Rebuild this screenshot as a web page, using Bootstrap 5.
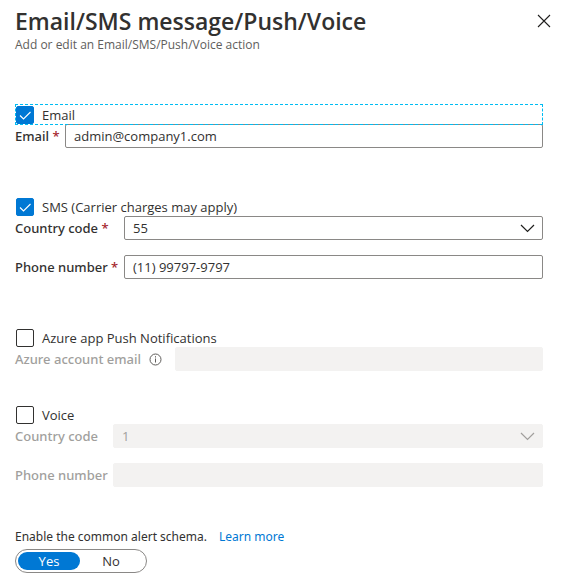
<!DOCTYPE html>
<html lang="en">
<head>
<meta charset="utf-8">
<meta name="viewport" content="width=device-width, initial-scale=1">
<title>Email/SMS message/Push/Voice</title>
<link href="https://cdn.jsdelivr.net/npm/bootstrap@5.3.0/dist/css/bootstrap.min.css" rel="stylesheet">
<style>
  body { font-family: "Open Sans", "Noto Sans", sans-serif; font-size: 13px; line-height: 20px; color: #323130; background: #fff; }
  .panel { padding: 6px 18px 8px 15px; }
  .panel-title { font-size: 23px; line-height: 30px; font-weight: 600; }
  .panel-sub { font-size: 12px; line-height: 18px; color: #605e5c; }
  .btn-dismiss { width: 16px; height: 16px; margin-top: 7px; margin-right: -9px; }
  .panel-form { margin-top: 50px; }
  .section { margin-bottom: 48px; }
  .section-short { margin-bottom: 33px; }
  .section-last { margin-bottom: 40px; }
  .check-row { height: 20px; padding-top: 2px; padding-left: 1px; gap: 8px; }
  .check-row.focused { outline: 1px dashed #00bcf2; position: relative; outline-offset: -1px; height: 21px; margin-bottom: -1px; padding-bottom: 1px; z-index: 1; }
  .check-row .form-check-input { width: 18px; height: 18px; margin: 0; border: 1px solid #323130; border-radius: 2px; }
  .check-row .form-check-input:checked { background-color: #0078d4; border-color: #0078d4; background-size: 18px 18px;
    background-image: url("data:image/svg+xml,%3Csvg xmlns='http://www.w3.org/2000/svg' viewBox='0 0 18 18'%3E%3Cpath fill='none' stroke='%23fff' stroke-width='1.1' d='M4 9.5l3.5 3.5L14.5 6'/%3E%3C/svg%3E"); }
  .fields { display: grid; row-gap: 15px; }
  .cols-email { grid-template-columns: 50px 1fr; }
  .cols-sms { grid-template-columns: 109px 1fr; }
  .cols-push { grid-template-columns: 160px 1fr; }
  .cols-voice { grid-template-columns: 98px 1fr; }
  .field-label { font-family: "Noto Sans", sans-serif; font-weight: 500; line-height: 24px; white-space: nowrap; }
  .field-label.off { color: #a19f9d; }
  .req { color: #a4262c; }
  .field { height: 24px; min-height: 24px; padding: 0 8px; font-size: 13px; line-height: 22px; color: #323130; border: 1px solid #8a8886; border-radius: 2px; }
  .form-select.field { background-size: 15px 10px; background-position: right 7px center;
    background-image: url("data:image/svg+xml,%3Csvg xmlns='http://www.w3.org/2000/svg' viewBox='0 0 15 10'%3E%3Cpath fill='none' stroke='%23201f1e' stroke-width='1.2' d='M1 2l6.5 6.5L14 2'/%3E%3C/svg%3E"); }
  .field:disabled { background-color: #f3f2f1; border-color: #f3f2f1; color: #a19f9d; opacity: 1; }
  .form-select.field:disabled {
    background-image: url("data:image/svg+xml,%3Csvg xmlns='http://www.w3.org/2000/svg' viewBox='0 0 15 10'%3E%3Cpath fill='none' stroke='%23a19f9d' stroke-width='1.2' d='M1 2l6.5 6.5L14 2'/%3E%3C/svg%3E"); }
  .schema-line { margin-bottom: 2px; gap: 12px; font-family: "Noto Sans", sans-serif; font-size: 12px; }
  .more { color: #0078d4; }
  .toggle { width: 132px; height: 24px; padding: 2px; border: 1px solid #8a8886; border-radius: 12px; }
  .toggle label { width: 62px; height: 18px; line-height: 18px; border-radius: 9px; text-align: center; cursor: pointer; }
  .toggle .btn-check:checked + label { background: #0078d4; color: #fff; }
</style>
<script src="https://cdn.jsdelivr.net/npm/bootstrap@5.3.0/dist/js/bootstrap.bundle.min.js"></script>
</head>
<body>
<main class="panel">
  <header class="d-flex justify-content-between align-items-start">
    <div>
      <h1 class="panel-title mb-0">Email/SMS message/Push/Voice</h1>
      <p class="panel-sub mb-0">Add or edit an Email/SMS/Push/Voice action</p>
    </div>
    <button type="button" class="btn-dismiss d-flex border-0 bg-transparent p-0" aria-label="Close">
      <svg width="16" height="16" viewBox="0 0 16 16" fill="none" stroke="#201f1e" stroke-width="1.1" aria-hidden="true"><path d="M2 2l12 12M14 2L2 14"/></svg>
    </button>
  </header>

  <form class="panel-form">
    <section class="section">
      <div class="check-row focused d-flex align-items-center">
        <input class="form-check-input" type="checkbox" id="useEmail" checked>
        <label for="useEmail">Email</label>
      </div>
      <div class="fields cols-email">
        <label class="field-label" for="email">Email <span class="req">*</span></label>
        <input class="form-control field" type="text" id="email" value="admin@company1.com">
      </div>
    </section>

    <section class="section">
      <div class="check-row d-flex align-items-center">
        <input class="form-check-input" type="checkbox" id="useSms" checked>
        <label for="useSms">SMS (Carrier charges may apply)</label>
      </div>
      <div class="fields cols-sms">
        <label class="field-label" for="smsCode">Country code <span class="req">*</span></label>
        <select class="form-select field" id="smsCode"><option>55</option></select>
        <label class="field-label" for="smsPhone">Phone number <span class="req">*</span></label>
        <input class="form-control field" type="text" id="smsPhone" value="(11) 99797-9797">
      </div>
    </section>

    <section class="section-short">
      <div class="check-row d-flex align-items-center">
        <input class="form-check-input" type="checkbox" id="usePush">
        <label for="usePush">Azure app Push Notifications</label>
      </div>
      <div class="fields cols-push">
        <div class="d-flex align-items-center gap-2">
          <label class="field-label off" for="account">Azure account email</label>
          <svg width="13" height="13" viewBox="0 0 13 13" fill="none" stroke="#605e5c" aria-hidden="true"><circle cx="6.5" cy="6.5" r="5.5"/><path d="M6.5 5.5v4M6.5 3.2v1.3"/></svg>
        </div>
        <input class="form-control field" type="text" id="account" disabled>
      </div>
    </section>

    <section class="section-last">
      <div class="check-row d-flex align-items-center">
        <input class="form-check-input" type="checkbox" id="useVoice">
        <label for="useVoice">Voice</label>
      </div>
      <div class="fields cols-voice">
        <label class="field-label off" for="voiceCode">Country code</label>
        <select class="form-select field" id="voiceCode" disabled><option>1</option></select>
        <label class="field-label off" for="voicePhone">Phone number</label>
        <input class="form-control field" type="text" id="voicePhone" disabled>
      </div>
    </section>

    <div class="schema-line d-flex"><span id="schemaLabel">Enable the common alert schema.</span><a class="more text-decoration-none" href="#">Learn more</a></div>
    <div class="toggle d-flex" role="radiogroup" aria-labelledby="schemaLabel">
      <input class="btn-check" type="radio" name="schema" id="schemaYes" checked>
      <label for="schemaYes">Yes</label>
      <input class="btn-check" type="radio" name="schema" id="schemaNo">
      <label for="schemaNo">No</label>
    </div>
  </form>
</main>
</body>
</html>
